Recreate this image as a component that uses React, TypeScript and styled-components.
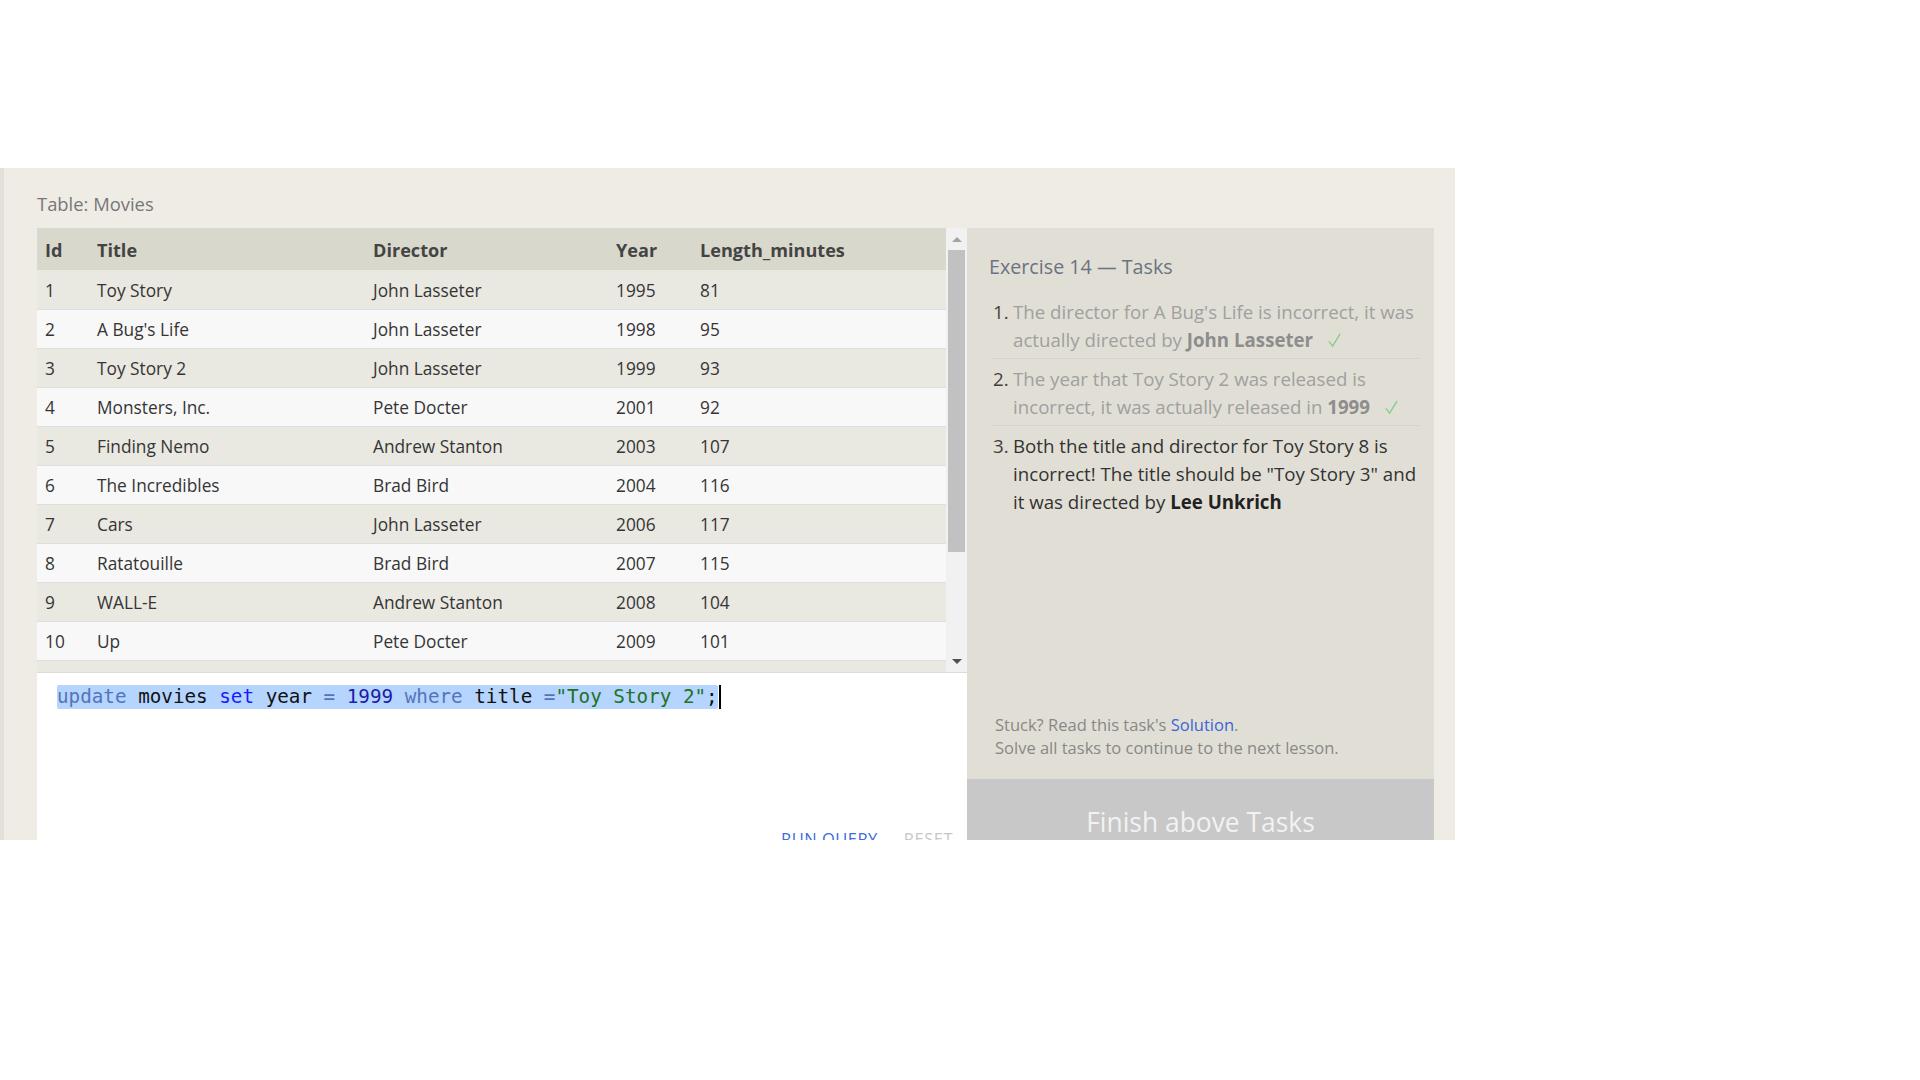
import React from "react";
import styled, { createGlobalStyle } from "styled-components";

const GlobalStyle = createGlobalStyle`
  html, body { margin: 0; padding: 0; background: #ffffff; }
  body { font-family: "Open Sans", "Noto Sans", sans-serif; }
  * { box-sizing: border-box; }
`;

const Page = styled.div`
  padding-top: 168px;
`;

const Frame = styled.section`
  width: 1455px;
  height: 672px;
  overflow: hidden;
  background: #efece6;
  border-left: 4px solid #e3e0dc;
  padding: 23px 21px 0 33px;
`;

const TableLabel = styled.div`
  font-size: 18.4px;
  line-height: 26px;
  color: #777777;
  margin-bottom: 11px;
`;

const Workspace = styled.div`
  display: flex;
  align-items: flex-start;
`;

const LeftColumn = styled.div`
  width: 930px;
  display: flex;
  flex-direction: column;
`;

const TableArea = styled.div`
  display: flex;
  height: 445px;
  border-bottom: 1px solid #dcdcd6;
`;

const TableViewport = styled.div`
  flex: 1;
  overflow: hidden;
  background: #e9e8e1;
`;

const Table = styled.table`
  width: 100%;
  border-collapse: collapse;
  table-layout: fixed;
  font-size: 17.3px;
  color: #353535;
`;

const HeadCell = styled.th`
  height: 42px;
  padding: 1px 8px 0;
  text-align: left;
  font-weight: 700;
  font-size: 18.1px;
  color: #444444;
  background: #d9d8cc;
`;

const Row = styled.tr<{ $alt: boolean }>`
  background: ${(p) => (p.$alt ? "#f8f8f8" : "#e9e8e1")};
`;

const Cell = styled.td`
  height: 39px;
  padding: 2px 8px 0;
  border-bottom: 1px solid #dedede;
  white-space: nowrap;
`;

const Scrollbar = styled.div`
  width: 21px;
  background: #f1f1f1;
  display: flex;
  flex-direction: column;
  align-items: center;
`;

const ArrowBox = styled.div`
  height: 22px;
  width: 100%;
  display: flex;
  align-items: center;
  justify-content: center;
`;

const Arrow = styled.div<{ $down?: boolean; $active?: boolean }>`
  width: 0;
  height: 0;
  border-left: 5px solid transparent;
  border-right: 5px solid transparent;
  ${(p) =>
    p.$down
      ? `border-top: 5px solid ${p.$active ? "#505050" : "#a3a3a3"};`
      : `border-bottom: 5px solid ${p.$active ? "#505050" : "#a3a3a3"};`}
`;

const Thumb = styled.div`
  width: 17px;
  height: 302px;
  background: #c1c1c1;
`;

const TrackSpacer = styled.div`
  flex: 1;
`;

const Editor = styled.div`
  background: #ffffff;
  display: flex;
  flex-direction: column;
  height: 240px;
`;

const CodeArea = styled.div`
  height: 145px;
  padding: 12px 20px 0;
`;

const CodeLine = styled.div`
  font-family: "DejaVu Sans Mono", "Liberation Mono", monospace;
  font-size: 19.25px;
  line-height: 24px;
  color: #111111;
  white-space: pre;
  display: flex;
  align-items: stretch;
`;

const Selection = styled.span`
  background: #b5d5ff;
  border-radius: 2px;
`;

const Token = styled.span<{ $kind: "kw" | "builtin" | "num" | "str" | "op" }>`
  color: ${(p) =>
    ({
      kw: "#5474b8",
      builtin: "#1a1aff",
      num: "#1c1ca8",
      str: "#22721f",
      op: "#5474b8",
    })[p.$kind]};
`;

const Cursor = styled.span`
  display: inline-block;
  width: 2px;
  height: 24px;
  background: #000000;
  margin-left: 1px;
`;

const ButtonRow = styled.div`
  display: flex;
  justify-content: flex-end;
  gap: 26px;
  padding: 7px 14px 8px;
`;

const TextButton = styled.button<{ $muted?: boolean }>`
  border: 0;
  background: transparent;
  padding: 4px 0;
  font-family: "Open Sans", sans-serif;
  font-size: 16.5px;
  line-height: 20px;
  letter-spacing: 0.5px;
  text-transform: uppercase;
  color: ${(p) => (p.$muted ? "#c8c8c8" : "#3d6be0")};
  cursor: pointer;
`;

const TaskPanel = styled.aside`
  width: 467px;
  height: 637px;
  background: #e1dfd5;
  display: flex;
  flex-direction: column;
  padding: 25px 14px 0 22px;
`;

const TaskTitle = styled.h2`
  margin: 0 0 11px;
  font-size: 19.7px;
  line-height: 28px;
  font-weight: 400;
  color: #6b7282;
`;

const TaskList = styled.ol`
  list-style: none;
  margin: 0 0 0 4px;
  padding: 0;
`;

const TaskItem = styled.li<{ $done?: boolean; $last?: boolean }>`
  display: flex;
  padding: 6px 0 4px;
  border-bottom: ${(p) => (p.$last ? "none" : "1px solid #d5d3c9")};
  font-size: 18.7px;
  line-height: 28px;
  color: ${(p) => (p.$done ? "#a0a0a0" : "#333333")};
  strong {
    font-weight: 700;
    color: ${(p) => (p.$done ? "#8d8d8d" : "#222222")};
  }
`;

const TaskNumber = styled.span`
  width: 20px;
  flex-shrink: 0;
  color: #3f3f3f;
`;

const TaskText = styled.span`
  flex: 1;
`;

const Check = styled.svg`
  width: 15px;
  height: 15px;
  margin-left: 14px;
  vertical-align: -1px;
`;

const Footer = styled.div`
  margin-top: auto;
  display: flex;
  flex-direction: column;
`;

const StuckText = styled.p`
  margin: 0 0 0 6px;
  font-size: 16.5px;
  line-height: 23px;
  color: #888888;
`;

const SolutionLink = styled.a`
  color: #3a66d6;
  text-decoration: none;
`;

const FinishButton = styled.div`
  margin: 20px -14px 0 -22px;
  background: #c8c8c8;
  color: #f2f2f2;
  font-size: 26.4px;
  line-height: 40px;
  text-align: center;
  padding: 23px 0;
`;

const movies = [
  [1, "Toy Story", "John Lasseter", 1995, 81],
  [2, "A Bug's Life", "John Lasseter", 1998, 95],
  [3, "Toy Story 2", "John Lasseter", 1999, 93],
  [4, "Monsters, Inc.", "Pete Docter", 2001, 92],
  [5, "Finding Nemo", "Andrew Stanton", 2003, 107],
  [6, "The Incredibles", "Brad Bird", 2004, 116],
  [7, "Cars", "John Lasseter", 2006, 117],
  [8, "Ratatouille", "Brad Bird", 2007, 115],
  [9, "WALL-E", "Andrew Stanton", 2008, 104],
  [10, "Up", "Pete Docter", 2009, 101],
];

const CheckMark = () => (
  <Check viewBox="0 0 16 16">
    <polyline points="2,9 6,14 14,1" fill="none" stroke="#86c98a" strokeWidth="1.4" />
  </Check>
);

export default function App() {
  return (
    <>
      <GlobalStyle />
      <Page>
        <Frame>
          <TableLabel>Table: Movies</TableLabel>
          <Workspace>
            <LeftColumn>
              <TableArea>
                <TableViewport>
                  <Table>
                    <colgroup>
                      <col style={{ width: 52 }} />
                      <col style={{ width: 276 }} />
                      <col style={{ width: 243 }} />
                      <col style={{ width: 84 }} />
                      <col />
                    </colgroup>
                    <thead>
                      <tr>
                        <HeadCell>Id</HeadCell>
                        <HeadCell>Title</HeadCell>
                        <HeadCell>Director</HeadCell>
                        <HeadCell>Year</HeadCell>
                        <HeadCell>Length_minutes</HeadCell>
                      </tr>
                    </thead>
                    <tbody>
                      {movies.map((m, i) => (
                        <Row key={i} $alt={i % 2 === 1}>
                          {m.map((v, j) => (
                            <Cell key={j}>{v}</Cell>
                          ))}
                        </Row>
                      ))}
                    </tbody>
                  </Table>
                </TableViewport>
                <Scrollbar>
                  <ArrowBox>
                    <Arrow />
                  </ArrowBox>
                  <Thumb />
                  <TrackSpacer />
                  <ArrowBox>
                    <Arrow $down $active />
                  </ArrowBox>
                </Scrollbar>
              </TableArea>
              <Editor>
                <CodeArea>
                  <CodeLine>
                    <Selection>
                      <Token $kind="kw">update</Token> movies <Token $kind="builtin">set</Token> year{" "}
                      <Token $kind="op">=</Token> <Token $kind="num">1999</Token>{" "}
                      <Token $kind="kw">where</Token> title <Token $kind="op">=</Token>
                      <Token $kind="str">"Toy Story 2"</Token>;
                    </Selection>
                    <Cursor />
                  </CodeLine>
                </CodeArea>
                <ButtonRow>
                  <TextButton>Run Query</TextButton>
                  <TextButton $muted>Reset</TextButton>
                </ButtonRow>
              </Editor>
            </LeftColumn>
            <TaskPanel>
              <TaskTitle>Exercise 14 — Tasks</TaskTitle>
              <TaskList>
                <TaskItem $done>
                  <TaskNumber>1.</TaskNumber>
                  <TaskText>
                    The director for A Bug's Life is incorrect, it was actually directed by{" "}
                    <strong>John Lasseter</strong>
                    <CheckMark />
                  </TaskText>
                </TaskItem>
                <TaskItem $done>
                  <TaskNumber>2.</TaskNumber>
                  <TaskText>
                    The year that Toy Story 2 was released is incorrect, it was actually released in{" "}
                    <strong>1999</strong>
                    <CheckMark />
                  </TaskText>
                </TaskItem>
                <TaskItem $last>
                  <TaskNumber>3.</TaskNumber>
                  <TaskText>
                    Both the title and director for Toy Story 8 is incorrect! The title should be "Toy
                    Story 3" and it was directed by <strong>Lee Unkrich</strong>
                  </TaskText>
                </TaskItem>
              </TaskList>
              <Footer>
                <StuckText>
                  Stuck? Read this task's <SolutionLink href="#">Solution</SolutionLink>.
                </StuckText>
                <StuckText>Solve all tasks to continue to the next lesson.</StuckText>
                <FinishButton>Finish above Tasks</FinishButton>
              </Footer>
            </TaskPanel>
          </Workspace>
        </Frame>
      </Page>
    </>
  );
}
